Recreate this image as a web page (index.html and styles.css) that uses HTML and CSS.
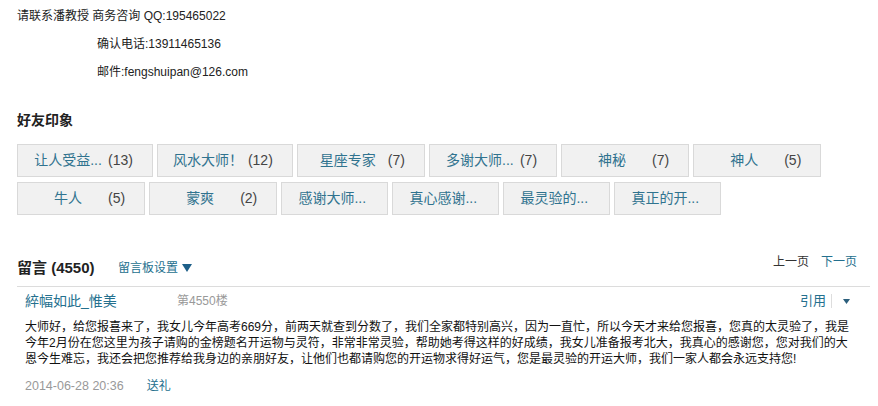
FILE: index.html
```html
<!DOCTYPE html>
<html lang="zh-CN">
<head>
<meta charset="utf-8">
<title>好友印象</title>
<link rel="stylesheet" href="styles.css">
</head>
<body>
<div class="page">
  <div class="contact">
    <div class="contact-line">请联系潘教授 商务咨询 QQ:195465022</div>
    <div class="contact-line indent">确认电话:13911465136</div>
    <div class="contact-line indent">邮件:fengshuipan@126.com</div>
  </div>

  <h2 class="section-title">好友印象</h2>
  <div class="tags">
    <a class="tag"><span class="tag-name">让人受益...</span><span class="tag-count">(13)</span></a>
    <a class="tag"><span class="tag-name">风水大师！</span><span class="tag-count">(12)</span></a>
    <a class="tag"><span class="tag-name">星座专家</span><span class="tag-count">(7)</span></a>
    <a class="tag"><span class="tag-name">多谢大师...</span><span class="tag-count">(7)</span></a>
    <a class="tag"><span class="tag-name">神秘</span><span class="tag-count">(7)</span></a>
    <a class="tag"><span class="tag-name">神人</span><span class="tag-count">(5)</span></a>
    <a class="tag"><span class="tag-name">牛人</span><span class="tag-count">(5)</span></a>
    <a class="tag"><span class="tag-name">蒙爽</span><span class="tag-count">(2)</span></a>
    <a class="tag"><span class="tag-name">感谢大师...</span></a>
    <a class="tag"><span class="tag-name">真心感谢...</span></a>
    <a class="tag"><span class="tag-name">最灵验的...</span></a>
    <a class="tag"><span class="tag-name">真正的开...</span></a>
  </div>

  <div class="board-head">
    <div class="board-left">
      <span class="board-title">留言 (4550)</span>
      <a class="board-settings">留言板设置 <svg class="tri" width="10" height="8" viewBox="0 0 10 8"><path d="M0 0H10L5 8Z" fill="#1d5f88"/></svg></a>
    </div>
    <div class="pager">
      <span class="pager-prev">上一页</span>
      <a class="pager-next">下一页</a>
    </div>
  </div>

  <div class="comment">
    <div class="comment-head">
      <div class="comment-who">
        <a class="comment-author">綷幅如此_惟美</a>
        <span class="comment-floor">第4550楼</span>
      </div>
      <div class="comment-actions">
        <a class="quote">引用</a>
        <span class="divider"></span>
        <svg class="tri-small" width="7" height="5" viewBox="0 0 7 5"><path d="M0 0H7L3.5 5Z" fill="#2b5f7c"/></svg>
      </div>
    </div>
    <p class="comment-body">大师好，给您报喜来了，我女儿今年高考669分，前两天就查到分数了，我们全家都特别高兴，因为一直忙，所以今天才来给您报喜，您真的太灵验了，我是今年2月份在您这里为孩子请购的金榜题名开运物与灵符，非常非常灵验，帮助她考得这样的好成绩，我女儿准备报考北大，我真心的感谢您，您对我们的大恩今生难忘，我还会把您推荐给我身边的亲朋好友，让他们也都请购您的开运物求得好运气，您是最灵验的开运大师，我们一家人都会永远支持您!</p>
    <div class="comment-foot">
      <span class="comment-date">2014-06-28 20:36</span>
      <a class="gift">送礼</a>
    </div>
  </div>
</div>
</body>
</html>
```

FILE: styles.css
```css
* { box-sizing: border-box; }
html, body {
  margin: 0;
  padding: 0;
  background: #fff;
}
body {
  font-family: "Liberation Sans", Arial, "Noto Sans CJK SC", sans-serif;
  font-size: 12px;
  color: #222;
}
a { color: #24708e; text-decoration: none; cursor: pointer; }

.page {
  width: 878px;
  padding: 2px 0 0 17px;
}

.contact-line {
  line-height: 28px;
  height: 28px;
  color: #222;
}
.contact-line.indent { padding-left: 80px; }

.section-title {
  margin: 24px 0 0 0;
  font-size: 14px;
  line-height: 20px;
  height: 20px;
  font-weight: bold;
  color: #222;
}

.tags {
  margin-top: 14px;
  width: 830px;
  display: flex;
  flex-wrap: wrap;
  column-gap: 4px;
  row-gap: 5px;
}
.tag {
  display: flex;
  height: 33px;
  line-height: 31px;
  padding: 0 15px 0 10px;
  background: #f1f1f1;
  border: 1px solid #d9d9d9;
  font-size: 14px;
  color: #30738f;
  white-space: nowrap;
}
.tag-name {
  display: inline-block;
  width: 80px;
  text-align: center;
}
.tag-count {
  display: inline-block;
  padding-right: 4px;
  color: #444;
}

.board-head {
  margin-top: 37px;
  width: 853px;
  display: flex;
  justify-content: space-between;
  align-items: flex-start;
  padding: 0 13px 8px 0;
  border-bottom: 1px solid #dcdcdc;
}
.board-left {
  padding-top: 6px;
  display: flex;
  align-items: center;
  line-height: 20px;
}
.board-title {
  display: inline-block;
  width: 101px;
  font-size: 15px;
  font-weight: bold;
  color: #222;
}
.board-settings {
  font-size: 12px;
  display: flex;
  align-items: center;
  gap: 2px;
  color: #24708e;
}
.tri { display: block; margin-left: 2px; }
.pager {
  line-height: 20px;
  display: flex;
  gap: 12px;
}
.pager-prev { color: #333; }

.comment {
  width: 853px;
  padding: 0 20px 0 8px;
}
.comment-head {
  margin-top: 4px;
  display: flex;
  justify-content: space-between;
  align-items: center;
  height: 20px;
  line-height: 20px;
}
.comment-who { display: flex; align-items: center; }
.comment-author {
  display: inline-block;
  width: 152px;
  font-size: 14px;
}
.comment-floor { color: #999; font-size: 12px; }
.comment-actions {
  display: flex;
  align-items: center;
}
.quote { font-size: 13px; }
.divider {
  width: 1px;
  height: 14px;
  background: #ddd;
  margin: 0 11px 0 5px;
}
.tri-small { display: block; }

.comment-body {
  margin: 8px 0 0 0;
  width: 830px;
  line-height: 16px;
  color: #111;
  word-break: break-all;
}
.comment-foot {
  margin-top: 9px;
  line-height: 20px;
  display: flex;
}
.comment-date { color: #999; font-size: 12.5px; }
.gift { margin-left: 23px; }
```
